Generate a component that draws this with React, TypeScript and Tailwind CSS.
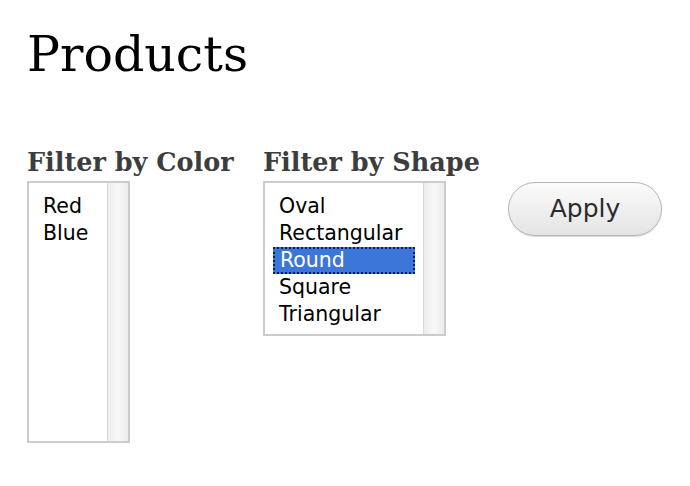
const colors = ["Red", "Blue"];
const shapes = ["Oval", "Rectangular", "Round", "Square", "Triangular"];

const serif = { fontFamily: "Georgia, 'DejaVu Serif', serif" };
const sans = { fontFamily: "'Lucida Grande', 'DejaVu Sans', sans-serif" };

function ListBox({
  items,
  selected,
  className,
}: {
  items: string[];
  selected?: string;
  className: string;
}) {
  return (
    <div className={`flex border-2 border-[#cccccc] bg-white ${className}`} style={sans}>
      <div className="flex-1 flex flex-col pt-[10px] pl-[8px] pr-[8px]">
        {items.map((item) => (
          <div
            key={item}
            className={
              item === selected
                ? "h-[27px] leading-[23px] pl-[5px] bg-[#3b76d8] text-white border-2 border-dotted border-[#0a1a6e]"
                : "h-[27px] leading-[27px] pl-[6px] text-black"
            }
          >
            {item}
          </div>
        ))}
      </div>
      <div className="w-[21px] border-l border-[#d9d9d9] bg-gradient-to-r from-[#ececec] via-[#f8f8f8] to-[#ececec]" />
    </div>
  );
}

export default function App() {
  return (
    <div className="w-[690px] h-[486px] bg-white pl-[27px] pt-[24px]">
      <h1 className="text-[49px] leading-[62px] text-black" style={serif}>
        Products
      </h1>
      <div className="flex mt-[62px]">
        <div className="flex flex-col w-[236px]">
          <h2
            className="text-[25.5px] leading-[28px] font-bold text-[#3d3d3d] mb-[5px]"
            style={serif}
          >
            Filter by Color
          </h2>
          <ListBox items={colors} className="w-[103px] h-[262px] text-[20.5px]" />
        </div>
        <div className="flex flex-col w-[245px]">
          <h2
            className="text-[25.5px] leading-[28px] font-bold text-[#3d3d3d] mb-[5px]"
            style={serif}
          >
            Filter by Shape
          </h2>
          <ListBox
            items={shapes}
            selected="Round"
            className="w-[183px] h-[155px] text-[20.5px]"
          />
        </div>
        <div className="pt-[34px]">
          <button
            className="w-[154px] h-[54px] rounded-full border border-[#b5b5b5] bg-gradient-to-b from-[#fbfbfb] to-[#e4e4e4] text-[25px] text-[#2b2b2b] shadow-[0_1px_1px_rgba(0,0,0,0.15)]"
            style={sans}
          >
            Apply
          </button>
        </div>
      </div>
    </div>
  );
}
